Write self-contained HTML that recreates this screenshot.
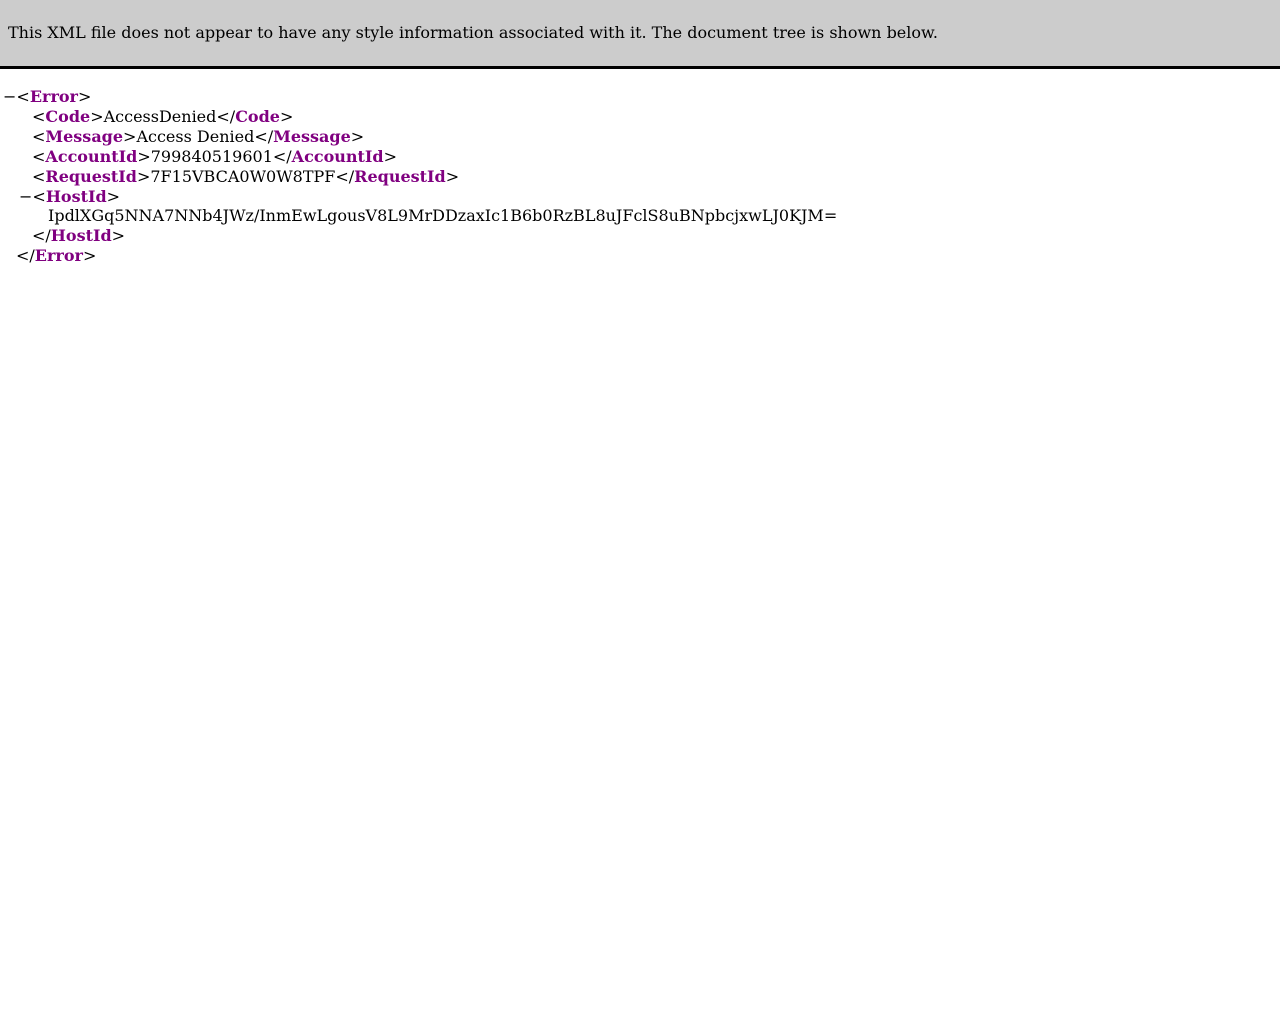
<!DOCTYPE html>
<html><head><style>
body{margin:0;background:#fff;font-family:"DejaVu Serif",serif;font-size:16px;color:#000;}
.hdr{position:absolute;left:0;top:0;width:1280px;height:66px;background:#ccc;border-bottom:3px solid #000;}
.hdr span{position:absolute;left:8px;top:22px;line-height:22px;white-space:nowrap;}
.l{position:absolute;line-height:20px;white-space:nowrap;}
b{color:purple;font-weight:bold;}
</style></head><body>
<div class="hdr"><span>This XML file does not appear to have any style information associated with it. The document tree is shown below.</span></div>
<div class="l" style="left:3px;top:87px">−&lt;<b>Error</b>&gt;</div>
<div class="l" style="left:32px;top:107px">&lt;<b>Code</b>&gt;AccessDenied&lt;/<b>Code</b>&gt;</div>
<div class="l" style="left:32px;top:127px">&lt;<b>Message</b>&gt;Access Denied&lt;/<b>Message</b>&gt;</div>
<div class="l" style="left:32px;top:147px">&lt;<b>AccountId</b>&gt;799840519601&lt;/<b>AccountId</b>&gt;</div>
<div class="l" style="left:32px;top:167px">&lt;<b>RequestId</b>&gt;7F15VBCA0W0W8TPF&lt;/<b>RequestId</b>&gt;</div>
<div class="l" style="left:19px;top:187px">−&lt;<b>HostId</b>&gt;</div>
<div class="l" style="left:48px;top:206px">IpdlXGq5NNA7NNb4JWz/InmEwLgousV8L9MrDDzaxIc1B6b0RzBL8uJFclS8uBNpbcjxwLJ0KJM=</div>
<div class="l" style="left:32px;top:226px">&lt;/<b>HostId</b>&gt;</div>
<div class="l" style="left:16px;top:246px">&lt;/<b>Error</b>&gt;</div>
</body></html>
